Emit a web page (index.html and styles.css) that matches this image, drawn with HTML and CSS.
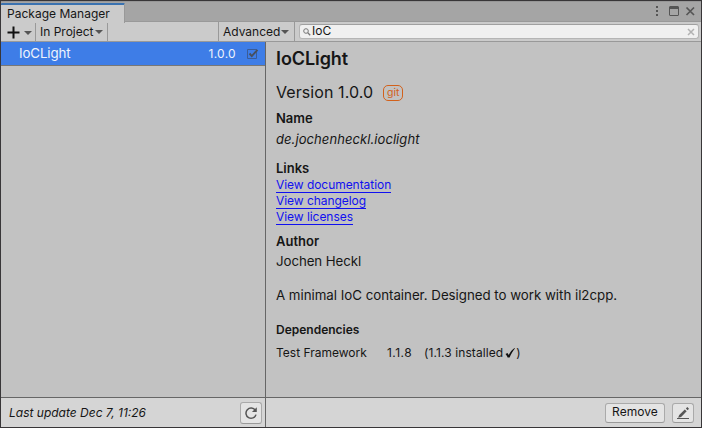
FILE: index.html
```html
<!DOCTYPE html>
<html lang="en">
<head>
<meta charset="utf-8">
<title>Package Manager</title>
<link rel="stylesheet" href="styles.css">
</head>
<body>
<div class="window">
  <header class="tabs">
    <div class="tab"><span class="t-tab">Package Manager</span></div>
    <div class="controls">
      <svg width="45" height="14" viewBox="0 0 45 14">
        <path class="dark" d="M1 2h2v2H1zM1 6h2v2H1zM1 10h2v2H1z"/>
        <path class="dark" fill-rule="evenodd" d="M15 2h8l1 1v8l-1 1h-8l-1-1V3zM15 5v6h8V5z"/>
        <path class="line" d="M31.500 3.500l7.500 7.500M39 3.500l-7.500 7.500" stroke-width="1.700"/>
      </svg>
    </div>
  </header>
  <nav class="toolbar">
    <div class="tool add"><svg width="13" height="13" viewBox="0 0 13 13"><path d="M6.500 .5v12M.5 6.500h12" stroke="#111" stroke-width="2"/></svg><i class="arrow"></i></div>
    <div class="tool project"><span class="t-project">In Project</span><i class="arrow"></i></div>
    <div class="tool advanced"><span class="t-advanced">Advanced</span><i class="arrow"></i></div>
    <div class="search">
      <svg width="8" height="8" viewBox="0 0 8 8"><circle cx="3" cy="3" r="2.300" fill="none" stroke="#777"/><path d="M4.800 4.800l2.400 2.400" stroke="#777" stroke-width="1.300"/></svg>
      <span class="t-search">IoC</span>
      <svg class="clear" width="8" height="8" viewBox="0 0 8 8"><path d="M1 1l6 6M7 1L1 7" stroke="#b2b2b2" stroke-width="1.500"/></svg>
    </div>
  </nav>
  <main class="content">
    <section class="list">
      <div class="row">
        <span class="t-row">IoCLight</span>
        <span class="t-rowver">1.0.0</span>
        <svg width="12" height="12" viewBox="0 0 12 12"><path d="M.5 1.500h9v9h-9z" fill="none" stroke="#3b5c96"/><path d="M2.500 5.500l2.300 2.600L10.500 1.800" fill="none" stroke="#484f5c" stroke-width="1.900"/></svg>
      </div>
    </section>
    <section class="details">
      <h1>IoCLight</h1>
      <div class="version"><span class="t-version">Version 1.0.0</span><span class="tag">git</span></div>
      <h2 class="h-name">Name</h2>
      <p class="id">de.jochenheckl.ioclight</p>
      <h2 class="h-links">Links</h2>
      <div class="links">
        <a>View documentation</a>
        <a>View changelog</a>
        <a>View licenses</a>
      </div>
      <h2 class="h-author">Author</h2>
      <p class="author">Jochen Heckl</p>
      <p class="desc">A minimal IoC container. Designed to work with il2cpp.</p>
      <h3>Dependencies</h3>
      <div class="dep">
        <span class="dep-name">Test Framework</span>
        <span class="dep-ver">1.1.8</span>
        <span class="installed">(1.1.3 installed</span>
        <svg width="12" height="12" viewBox="0 0 12 12"><path d="M1.500 7l2-1 1.200 1.900C6.200 5.300 8 2.700 10.500 1l.4.500C8.800 4 7 7.200 5.600 10.600H3.600C3.200 9.300 2.400 7.900 1.500 7z" fill="#111"/></svg>
        <span>)</span>
      </div>
    </section>
  </main>
  <footer class="footer">
    <div class="foot-left">
      <span class="t-update">Last update Dec 7, 11:26</span>
      <button class="btn refresh" aria-label="Refresh"><svg width="14" height="14" viewBox="0 0 14 14"><path d="M11.300 4.300A5.100 5.100 0 1 0 12 8.600" fill="none" stroke="#555" stroke-width="1.500"/><path d="M12.800 1.200v4.900H7.900z" fill="#555"/></svg></button>
    </div>
    <div class="foot-right">
      <button class="btn remove">Remove</button>
      <button class="btn edit" aria-label="Edit"><svg width="14" height="14" viewBox="0 0 14 14"><path d="M3.200 9L8.800 3.400l1.900 1.900L5.100 10.900l-3 .8zM9.900 2.500l1.400-1.400 1.700 1.700-1.400 1.400z" fill="#555"/><path d="M1 12.500h12" stroke="#555"/></svg></button>
    </div>
  </footer>
</div>
</body>
</html>
```
FILE: styles.css
```css
* { box-sizing: border-box; }
body { margin: 0; font: 12px/16px Inter, "Liberation Sans", sans-serif; color: #161616; }
h1, h2, h3, p { margin: 0; }
svg { display: block; flex: none; }
.window { width: 702px; height: 428px; display: flex; flex-direction: column; border: 1px solid #383638; background: #c2c2c2; white-space: nowrap; }
.tabs { height: 20px; display: flex; background: #a5a5a5; border-top: 1px solid #979797; padding-top: 1px; }
.tab { width: 124px; height: 20px; position: relative; z-index: 1; background: #cbcbcb; border-top: 2px solid #3a72b0; border-right: 1px solid #999; padding: 1px 0 0 6px; border-radius: 1px 1px 0 0; }
.t-tab { letter-spacing: .02px; }
.controls { margin-left: auto; padding: 1px 1px 0 0; }
.dark { fill: #555; }
.line { stroke: #555; fill: none; }
.toolbar { height: 21px; display: flex; background: #cbcbcb; border-top: 1px solid #999; border-bottom: 1px solid #999; line-height: 17px; }
.tool { display: flex; align-items: center; border-right: 1px solid #999; height: 19px; }
.add { width: 35px; padding: 1px 0 0 6px; gap: 4px; }
.project { width: 72px; padding-left: 4px; gap: 1px; }
.advanced { width: 77px; margin-left: 110px; padding-left: 4px; gap: 1px; border-left: 1px solid #999; }
.arrow { width: 0; height: 0; margin-top: 1px; border: 4px solid transparent; border-top-color: #555; border-bottom: 0; }
.search { width: 400px; height: 15px; margin: 2px 0 0 4px; display: flex; align-items: center; background: #f0f0f0; border: 1px solid #b5b5b5; border-top-color: #a0a0a0; border-radius: 3px; padding: 0 3px; gap: 1px; line-height: 13px; }
.search svg { margin-top: 1px; }
.t-search { position: relative; top: -1px; }
.search .clear { margin-left: auto; }
.content { flex: 1; display: flex; min-height: 0; }
.list { width: 265px; border-right: 1px solid #666; }
.row { height: 24px; display: flex; align-items: center; background: #3e7de7; border-bottom: 1px solid #777; color: #eef3fc; padding: 0 6px 0 18px; }
.t-row { font-size: 13.3px; letter-spacing: -.12px; padding-bottom: 1px; }
.t-rowver { margin-left: auto; margin-right: 11px; letter-spacing: .3px; }
.details { flex: 1; padding: 5px 0 0 10px; }
h1 { font-size: 18px; line-height: 24px; font-weight: 600; letter-spacing: -.08px; }
h2 { font-size: 13px; line-height: 16px; font-weight: 600; }
h3 { font-size: 12px; line-height: 16px; font-weight: 600; margin-top: 19px; }
.version { display: flex; align-items: center; font-size: 16px; height: 20px; margin-top: 11px; gap: 10px; letter-spacing: .08px; }
.tag { width: 20px; height: 16px; margin-top: 1px; border: 1px solid #d2611b; border-radius: 5px; font-size: 10.500px; line-height: 14px; text-align: center; color: #d2611b; letter-spacing: 0; }
.h-name { margin-top: 8px; }
.id { font-size: 13px; line-height: 16px; font-style: italic; margin-top: 5px; letter-spacing: .08px; }
.h-links { margin-top: 13px; }
.links { display: flex; flex-direction: column; align-items: flex-start; gap: 1px; margin-top: 1px; }
.links a { height: 16px; line-height: 15px; margin-bottom: -1px; border-bottom: 1px solid #1010f0; color: #1010f0; letter-spacing: -.05px; }
.h-author { margin-top: 9px; }
.author { font-size: 13.300px; margin-top: 4px; letter-spacing: -.08px; }
.desc { font-size: 13.300px; margin-top: 18px; letter-spacing: -.02px; }
.dep { display: flex; height: 16px; margin-top: 7px; }
.dep-name { width: 111px; }
.dep-ver { width: 37px; letter-spacing: .45px; }
.installed { letter-spacing: .1px; }
.dep svg { margin: 2px 0 0 1px; }
.footer { height: 30px; display: flex; background: #d5d5d5; border-top: 1px solid #666; }
.foot-left { width: 265px; display: flex; align-items: center; justify-content: space-between; padding: 0 3px 0 8px; border-right: 1px solid #666; font-style: italic; }
.foot-right { flex: 1; display: flex; align-items: center; justify-content: flex-end; gap: 7px; padding-right: 7px; }
.btn { display: flex; align-items: center; justify-content: center; padding: 0; height: 20px; font: inherit; color: inherit; background: #e4e4e4; border: 1px solid #aaa; border-bottom-color: #999; border-radius: 3px; }
.refresh { width: 22px; height: 22px; }
.remove { width: 60px; padding-bottom: 2px; letter-spacing: .05px; }
.edit { width: 22px; }
```
